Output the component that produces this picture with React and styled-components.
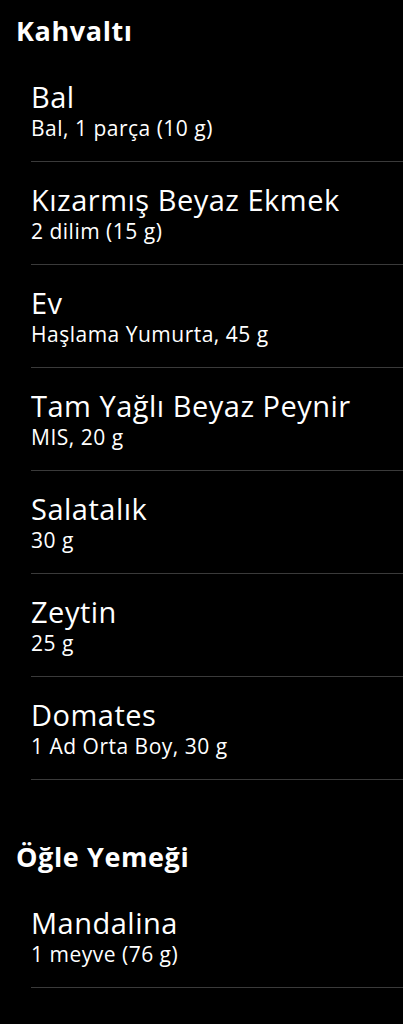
import styled, { createGlobalStyle } from "styled-components";

const GlobalStyle = createGlobalStyle`
  html, body {
    margin: 0;
    padding: 0;
    background: #000;
  }
`;

const Page = styled.div`
  background: #000;
  color: #fff;
  min-height: 1024px;
  font-family: "Open Sans", "Noto Sans", sans-serif;
  padding-top: 15px;
`;

const Section = styled.section`
  margin-bottom: ${({ $gap }) => $gap || 0}px;
`;

const SectionTitle = styled.h2`
  margin: 0 0 12px;
  padding-left: 16px;
  font-size: 27px;
  line-height: 32px;
  font-weight: 700;
  letter-spacing: 0.6px;
`;

const List = styled.div`
  padding-left: 31px;
`;

const Item = styled.div`
  padding: 23px 0 22px;
  border-bottom: 1px solid #3a3a3a;
`;

const ItemName = styled.div`
  font-size: 29px;
  line-height: 30px;
  letter-spacing: 0.5px;
`;

const ItemDetail = styled.div`
  font-size: 21px;
  line-height: 22px;
  letter-spacing: 0.5px;
  margin-top: 5px;
`;

const meals = [
  {
    title: "Kahvaltı",
    items: [
      ["Bal", "Bal, 1 parça (10 g)"],
      ["Kızarmış Beyaz Ekmek", "2 dilim (15 g)"],
      ["Ev", "Haşlama Yumurta, 45 g"],
      ["Tam Yağlı Beyaz Peynir", "MIS, 20 g"],
      ["Salatalık", "30 g"],
      ["Zeytin", "25 g"],
      ["Domates", "1 Ad Orta Boy, 30 g"],
    ],
  },
  {
    title: "Öğle Yemeği",
    items: [["Mandalina", "1 meyve (76 g)"]],
  },
];

function App() {
  return (
    <Page>
      <GlobalStyle />
      {meals.map((meal) => (
        <Section key={meal.title} $gap={61}>
          <SectionTitle>{meal.title}</SectionTitle>
          <List>
            {meal.items.map(([name, detail]) => (
              <Item key={name}>
                <ItemName>{name}</ItemName>
                <ItemDetail>{detail}</ItemDetail>
              </Item>
            ))}
          </List>
        </Section>
      ))}
    </Page>
  );
}

export default App;
